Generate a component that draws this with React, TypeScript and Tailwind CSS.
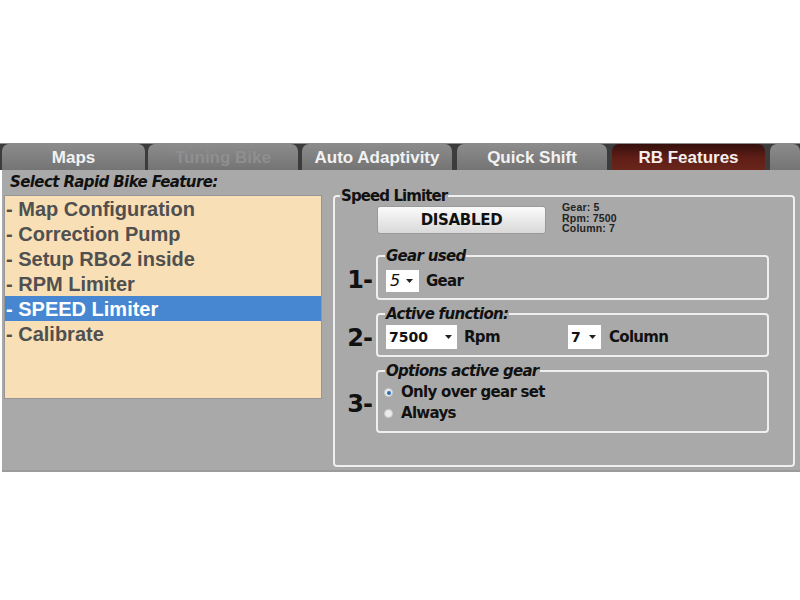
import React from "react";

const tahoma = { fontFamily: '"DejaVu Sans", Verdana, sans-serif' };
const arial = { fontFamily: '"Liberation Sans", Arial, sans-serif' };

function Arrow() {
  return (
    <svg width="7" height="4" viewBox="0 0 7 4" className="shrink-0">
      <path d="M0 0 L7 0 L3.5 4 Z" fill="#222" />
    </svg>
  );
}

function Radio({ checked }: { checked: boolean }) {
  return (
    <div className="w-[9px] h-[9px] rounded-full bg-[#ececec] border border-[#c8c8c8] flex items-center justify-center shrink-0">
      {checked && <div className="w-[4px] h-[4px] rounded-full bg-[#2a6db8]" />}
    </div>
  );
}

export default function App() {
  const tabs = [
    { label: "Maps", w: "w-[143px]", ml: "ml-0", kind: "n" },
    { label: "Tuning Bike", w: "w-[150px]", ml: "ml-[3px]", kind: "d" },
    { label: "Auto Adaptivity", w: "w-[150px]", ml: "ml-[4px]", kind: "n" },
    { label: "Quick Shift", w: "w-[150px]", ml: "ml-[5px]", kind: "n" },
    { label: "RB Features", w: "w-[153px]", ml: "ml-[5px]", kind: "a" },
    { label: "", w: "w-[30px]", ml: "ml-[5px]", kind: "n" },
  ];
  const items = [
    "- Map Configuration",
    "- Correction Pump",
    "- Setup RBo2 inside",
    "- RPM Limiter",
    "- SPEED Limiter",
    "- Calibrate",
  ];
  return (
    <div className="w-[800px] h-[600px] bg-white flex flex-col overflow-hidden">
      <div className="h-[143px] shrink-0" />
      {/* tab bar */}
      <div className="h-[27px] shrink-0 flex items-end bg-[#3c3c3c] border-t border-[#8c8c8c] pl-[2px]">
        {tabs.map((t, i) => (
          <div
            key={i}
            className={`${t.w} ${t.ml} h-[26px] shrink-0 rounded-t-[7px] flex items-center justify-center text-[17px] font-bold leading-none ${
              t.kind === "a"
                ? "bg-linear-to-b from-[#34100c] via-[#5e1d16] to-[#6a261b] text-[#f4eeec]"
                : t.kind === "d"
                ? "bg-linear-to-b from-[#8c8c8c] to-[#747474] text-[#8f8f8f]"
                : "bg-linear-to-b from-[#8c8c8c] to-[#747474] text-[#f2f2f2]"
            }`}
            style={arial}
          >
            {t.label}
          </div>
        ))}
      </div>
      {/* main */}
      <div className="h-[302px] shrink-0 ml-[2px] bg-[#a9a9a9] border-b-2 border-[#9b9b9b] flex">
        {/* left column */}
        <div className="w-[320px] shrink-0 pl-[2px] flex flex-col">
          <div
            className="h-[25px] pt-[3px] pl-[6px] text-[15px] leading-[18px] font-bold italic text-[#111] tracking-[-0.6px]"
            style={tahoma}
          >
            Select Rapid Bike Feature:
          </div>
          <div className="h-[204px] bg-[#f8dfb6] border border-[#959595] flex flex-col">
            {items.map((it, i) => (
              <div
                key={it}
                className={`h-[25px] shrink-0 pl-[1px] flex items-center text-[20px] font-bold leading-none ${
                  i === 4 ? "bg-[#4787d1] text-white" : "text-[#505050]"
                }`}
                style={arial}
              >
                {it}
              </div>
            ))}
          </div>
        </div>
        {/* right group */}
        <fieldset className="ml-[11px] mt-[18px] w-[462px] h-[279px] shrink-0 border-2 border-[#efefef] rounded-[4px] flex flex-col">
          <legend
            className="ml-[5px] px-[1px] text-[15px] leading-[16px] font-bold text-[#111] tracking-[-0.9px]"
            style={tahoma}
          >
            Speed Limiter
          </legend>
          <div className="flex items-start mt-[2px]">
            <div
              className="ml-[42px] w-[169px] h-[28px] rounded-[3px] border border-[#9a9a9a] bg-linear-to-b from-[#fbfbfb] to-[#d9d9d9] flex items-center justify-center text-[15px] font-bold text-[#111] tracking-[-0.3px]"
              style={tahoma}
            >
              DISABLED
            </div>
            <div
              className="ml-[16px] -mt-[4px] text-[10.5px] leading-[10.5px] font-bold text-[#222] tracking-[0.2px] flex flex-col"
              style={arial}
            >
              <span>Gear: 5</span>
              <span>Rpm: 7500</span>
              <span>Column: 7</span>
            </div>
          </div>

          {/* row 1 */}
          <div className="flex mt-[14px]">
            <div
              className="w-[41px] shrink-0 pr-[4px] pt-[12px] flex items-center justify-end text-[24px] font-bold text-[#111] leading-none tracking-[-1px]"
              style={tahoma}
            >
              1-
            </div>
            <fieldset className="w-[393px] h-[52px] border-2 border-[#efefef] rounded-[4px]">
              <legend
                className="ml-[7px] px-[1px] text-[15px] leading-[16px] font-bold italic text-[#111] tracking-[-0.7px]"
                style={tahoma}
              >
                Gear used
              </legend>
              <div className="flex items-center mt-[6px] pl-[8px]">
                <div className="w-[33px] h-[22px] bg-white flex items-center pl-[4px]">
                  <span className="text-[16px] italic text-[#111] leading-none" style={tahoma}>
                    5
                  </span>
                  <span className="ml-[6px]">
                    <Arrow />
                  </span>
                </div>
                <span
                  className="ml-[7px] text-[15px] font-bold text-[#111] tracking-[-0.7px]"
                  style={tahoma}
                >
                  Gear
                </span>
              </div>
            </fieldset>
          </div>

          {/* row 2 */}
          <div className="flex mt-[6px]">
            <div
              className="w-[41px] shrink-0 pr-[4px] pt-[12px] flex items-center justify-end text-[24px] font-bold text-[#111] leading-none tracking-[-1px]"
              style={tahoma}
            >
              2-
            </div>
            <fieldset className="w-[393px] h-[51px] border-2 border-[#efefef] rounded-[4px]">
              <legend
                className="ml-[7px] px-[1px] text-[15px] leading-[16px] font-bold italic text-[#111] tracking-[-0.7px]"
                style={tahoma}
              >
                Active function:
              </legend>
              <div className="flex items-center mt-[3px] pl-[8px]">
                <div className="w-[182px] shrink-0 flex items-center">
                  <div className="w-[71px] h-[24px] bg-white flex items-center justify-between pl-[3px] pr-[5px]">
                    <span className="text-[14px] font-bold text-[#111] leading-none" style={tahoma}>
                      7500
                    </span>
                    <Arrow />
                  </div>
                  <span
                    className="ml-[7px] text-[15px] font-bold text-[#111] tracking-[-0.7px]"
                    style={tahoma}
                  >
                    Rpm
                  </span>
                </div>
                <div className="w-[33px] h-[24px] bg-white flex items-center justify-between pl-[3px] pr-[5px]">
                  <span className="text-[14px] font-bold text-[#111] leading-none" style={tahoma}>
                    7
                  </span>
                  <Arrow />
                </div>
                <span
                  className="ml-[8px] text-[15px] font-bold text-[#111] tracking-[-0.7px]"
                  style={tahoma}
                >
                  Column
                </span>
              </div>
            </fieldset>
          </div>

          {/* row 3 */}
          <div className="flex mt-[6px]">
            <div
              className="w-[41px] shrink-0 pr-[4px] pt-[12px] flex items-center justify-end text-[24px] font-bold text-[#111] leading-none tracking-[-1px]"
              style={tahoma}
            >
              3-
            </div>
            <fieldset className="w-[393px] h-[70px] border-2 border-[#efefef] rounded-[4px]">
              <legend
                className="ml-[7px] px-[1px] text-[15px] leading-[16px] font-bold italic text-[#111] tracking-[-0.7px]"
                style={tahoma}
              >
                Options active gear
              </legend>
              <div className="flex flex-col mt-[3px] pl-[6px]">
                <div className="h-[21px] flex items-center">
                  <Radio checked />
                  <span
                    className="ml-[8px] text-[15px] font-bold text-[#111] tracking-[-0.7px]"
                    style={tahoma}
                  >
                    Only over gear set
                  </span>
                </div>
                <div className="h-[21px] flex items-center">
                  <Radio checked={false} />
                  <span
                    className="ml-[8px] text-[15px] font-bold text-[#111] tracking-[-0.7px]"
                    style={tahoma}
                  >
                    Always
                  </span>
                </div>
              </div>
            </fieldset>
          </div>
        </fieldset>
      </div>
    </div>
  );
}
